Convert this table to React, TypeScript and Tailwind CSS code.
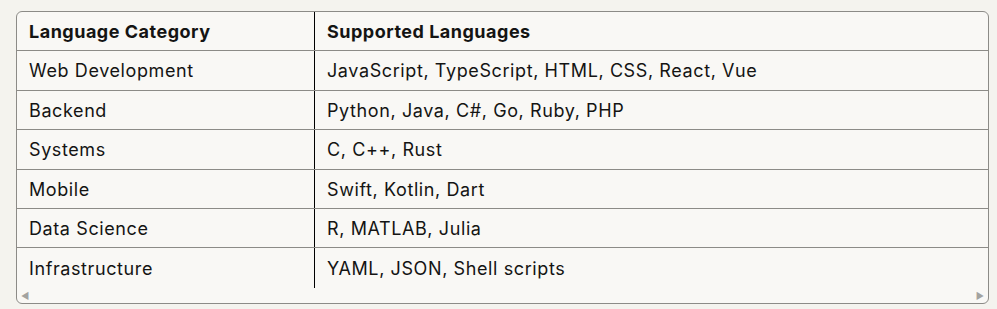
import React from "react";

const ROWS: { cat: string; langs: string; h: string }[] = [
  { cat: "Web Development", langs: "JavaScript, TypeScript, HTML, CSS, React, Vue", h: "h-[40px]" },
  { cat: "Backend", langs: "Python, Java, C#, Go, Ruby, PHP", h: "h-[39px]" },
  { cat: "Systems", langs: "C, C++, Rust", h: "h-[40px]" },
  { cat: "Mobile", langs: "Swift, Kotlin, Dart", h: "h-[39px]" },
  { cat: "Data Science", langs: "R, MATLAB, Julia", h: "h-[39px]" },
  { cat: "Infrastructure", langs: "YAML, JSON, Shell scripts", h: "h-[40px]" },
];

export default function App() {
  return (
    <div className="h-[309px] w-[997px] bg-[#f4f3ee] pl-4 pt-[11px] font-['Inter',sans-serif] text-[#141413]">
      <div className="w-[973px] overflow-hidden rounded-[6px] border border-[#8c8b87] bg-[#f9f8f5]">
        <div className="flex flex-col">
          <div className="flex h-[39px] border-b border-[#8c8b87] text-[18px] font-bold tracking-[0.5px]">
            <div className="flex w-[298px] items-center border-r border-black pl-3">Language Category</div>
            <div className="flex flex-1 items-center pl-3">Supported Languages</div>
          </div>
          {ROWS.map((r, i) => (
            <div
              key={r.cat}
              className={`flex ${r.h} text-[18px] tracking-[0.6px] ${i < ROWS.length - 1 ? "border-b border-[#8c8b87]" : ""}`}
            >
              <div className="flex w-[298px] items-center border-r border-black pl-3">{r.cat}</div>
              <div className="flex flex-1 items-center pl-3">{r.langs}</div>
            </div>
          ))}
        </div>
        <div className="flex h-[15px] items-center justify-between px-[4px] text-[9px] leading-none text-[#a3a3a0]">
          <span>◀</span>
          <span>▶</span>
        </div>
      </div>
    </div>
  );
}
